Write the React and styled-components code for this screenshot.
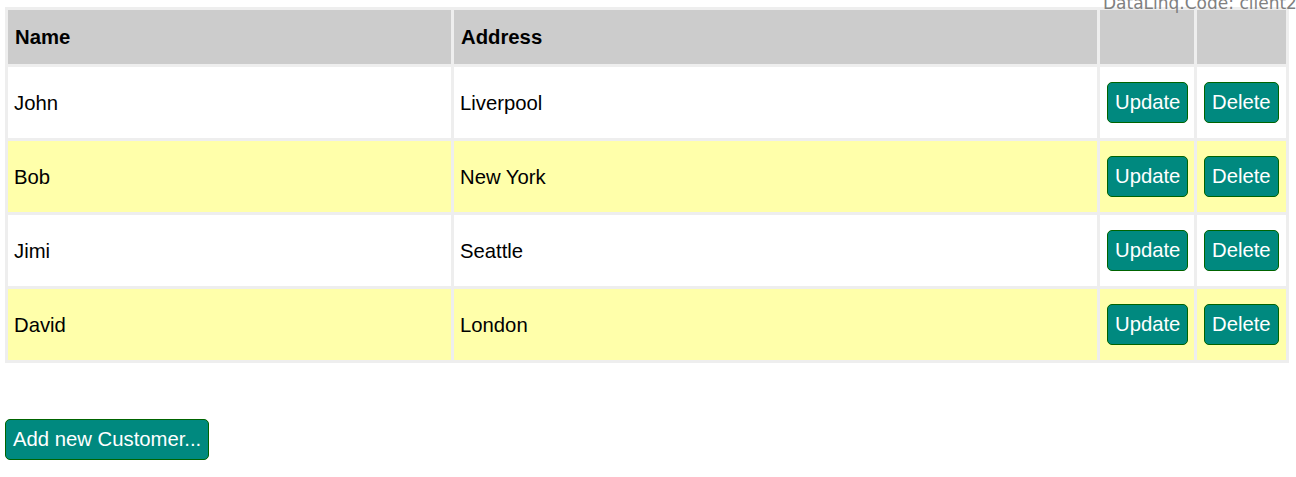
import React from 'react'
import styled, { createGlobalStyle } from 'styled-components'

const GlobalStyle = createGlobalStyle`
  html, body {
    margin: 0;
    padding: 0;
    background: #fff;
    overflow: hidden;
  }
  body {
    font-family: "Liberation Sans", Arial, sans-serif;
  }
`

const customers = [
  { name: 'John', address: 'Liverpool' },
  { name: 'Bob', address: 'New York' },
  { name: 'Jimi', address: 'Seattle' },
  { name: 'David', address: 'London' },
]

export default function App() {
  return (
    <Page>
      <GlobalStyle />
      <CodeLabel>DataLinq.Code: client2</CodeLabel>
      <Grid>
        <thead>
          <tr>
            <HeadCell $width={443}>Name</HeadCell>
            <HeadCell $width={643}>Address</HeadCell>
            <HeadCell $width={94}></HeadCell>
            <HeadCell $width={89}></HeadCell>
          </tr>
        </thead>
        <tbody>
          {customers.map((c, i) => (
            <Row key={c.name} $odd={i % 2 === 1}>
              <Cell>{c.name}</Cell>
              <Cell>{c.address}</Cell>
              <ActionCell><ActionButton>Update</ActionButton></ActionCell>
              <ActionCell><ActionButton>Delete</ActionButton></ActionCell>
            </Row>
          ))}
        </tbody>
      </Grid>
      <Footer>
        <ActionButton>Add new Customer...</ActionButton>
      </Footer>
    </Page>
  )
}

const Page = styled.div`
  position: relative;
  padding: 7px 5px;
  width: 1296px;
  height: 477px;
  box-sizing: border-box;
`

const CodeLabel = styled.div`
  position: absolute;
  top: -7px;
  left: 1103px;
  white-space: nowrap;
  font-family: "DejaVu Sans", sans-serif;
  font-size: 17px;
  color: #808080;
`

const Grid = styled.table`
  width: 1284px;
  border-collapse: separate;
  border-spacing: 3px;
  background: #eeeeee;
  table-layout: fixed;
`

const HeadCell = styled.th`
  width: ${p => p.$width}px;
  height: 54px;
  padding: 1px 7px 0;
  box-sizing: border-box;
  background: #cccccc;
  text-align: left;
  font-size: 20.3px;
  font-weight: bold;
  color: #000;
`

const Row = styled.tr`
  background: ${p => (p.$odd ? '#ffffaa' : '#ffffff')};
`

const Cell = styled.td`
  height: 71px;
  padding: 2px 6px 0;
  box-sizing: border-box;
  font-size: 20.3px;
  color: #000;
`

const ActionCell = styled.td`
  height: 71px;
  padding: 0 5px 0 7px;
  box-sizing: border-box;
`

const ActionButton = styled.button`
  font-family: "Liberation Sans", Arial, sans-serif;
  font-size: 20.3px;
  color: #fff;
  background: #00897f;
  border: 1px solid #006400;
  border-radius: 5px;
  height: 41px;
  padding: 0 7px;
  cursor: pointer;
`

const Footer = styled.div`
  margin-top: 56px;
  display: flex;
`
